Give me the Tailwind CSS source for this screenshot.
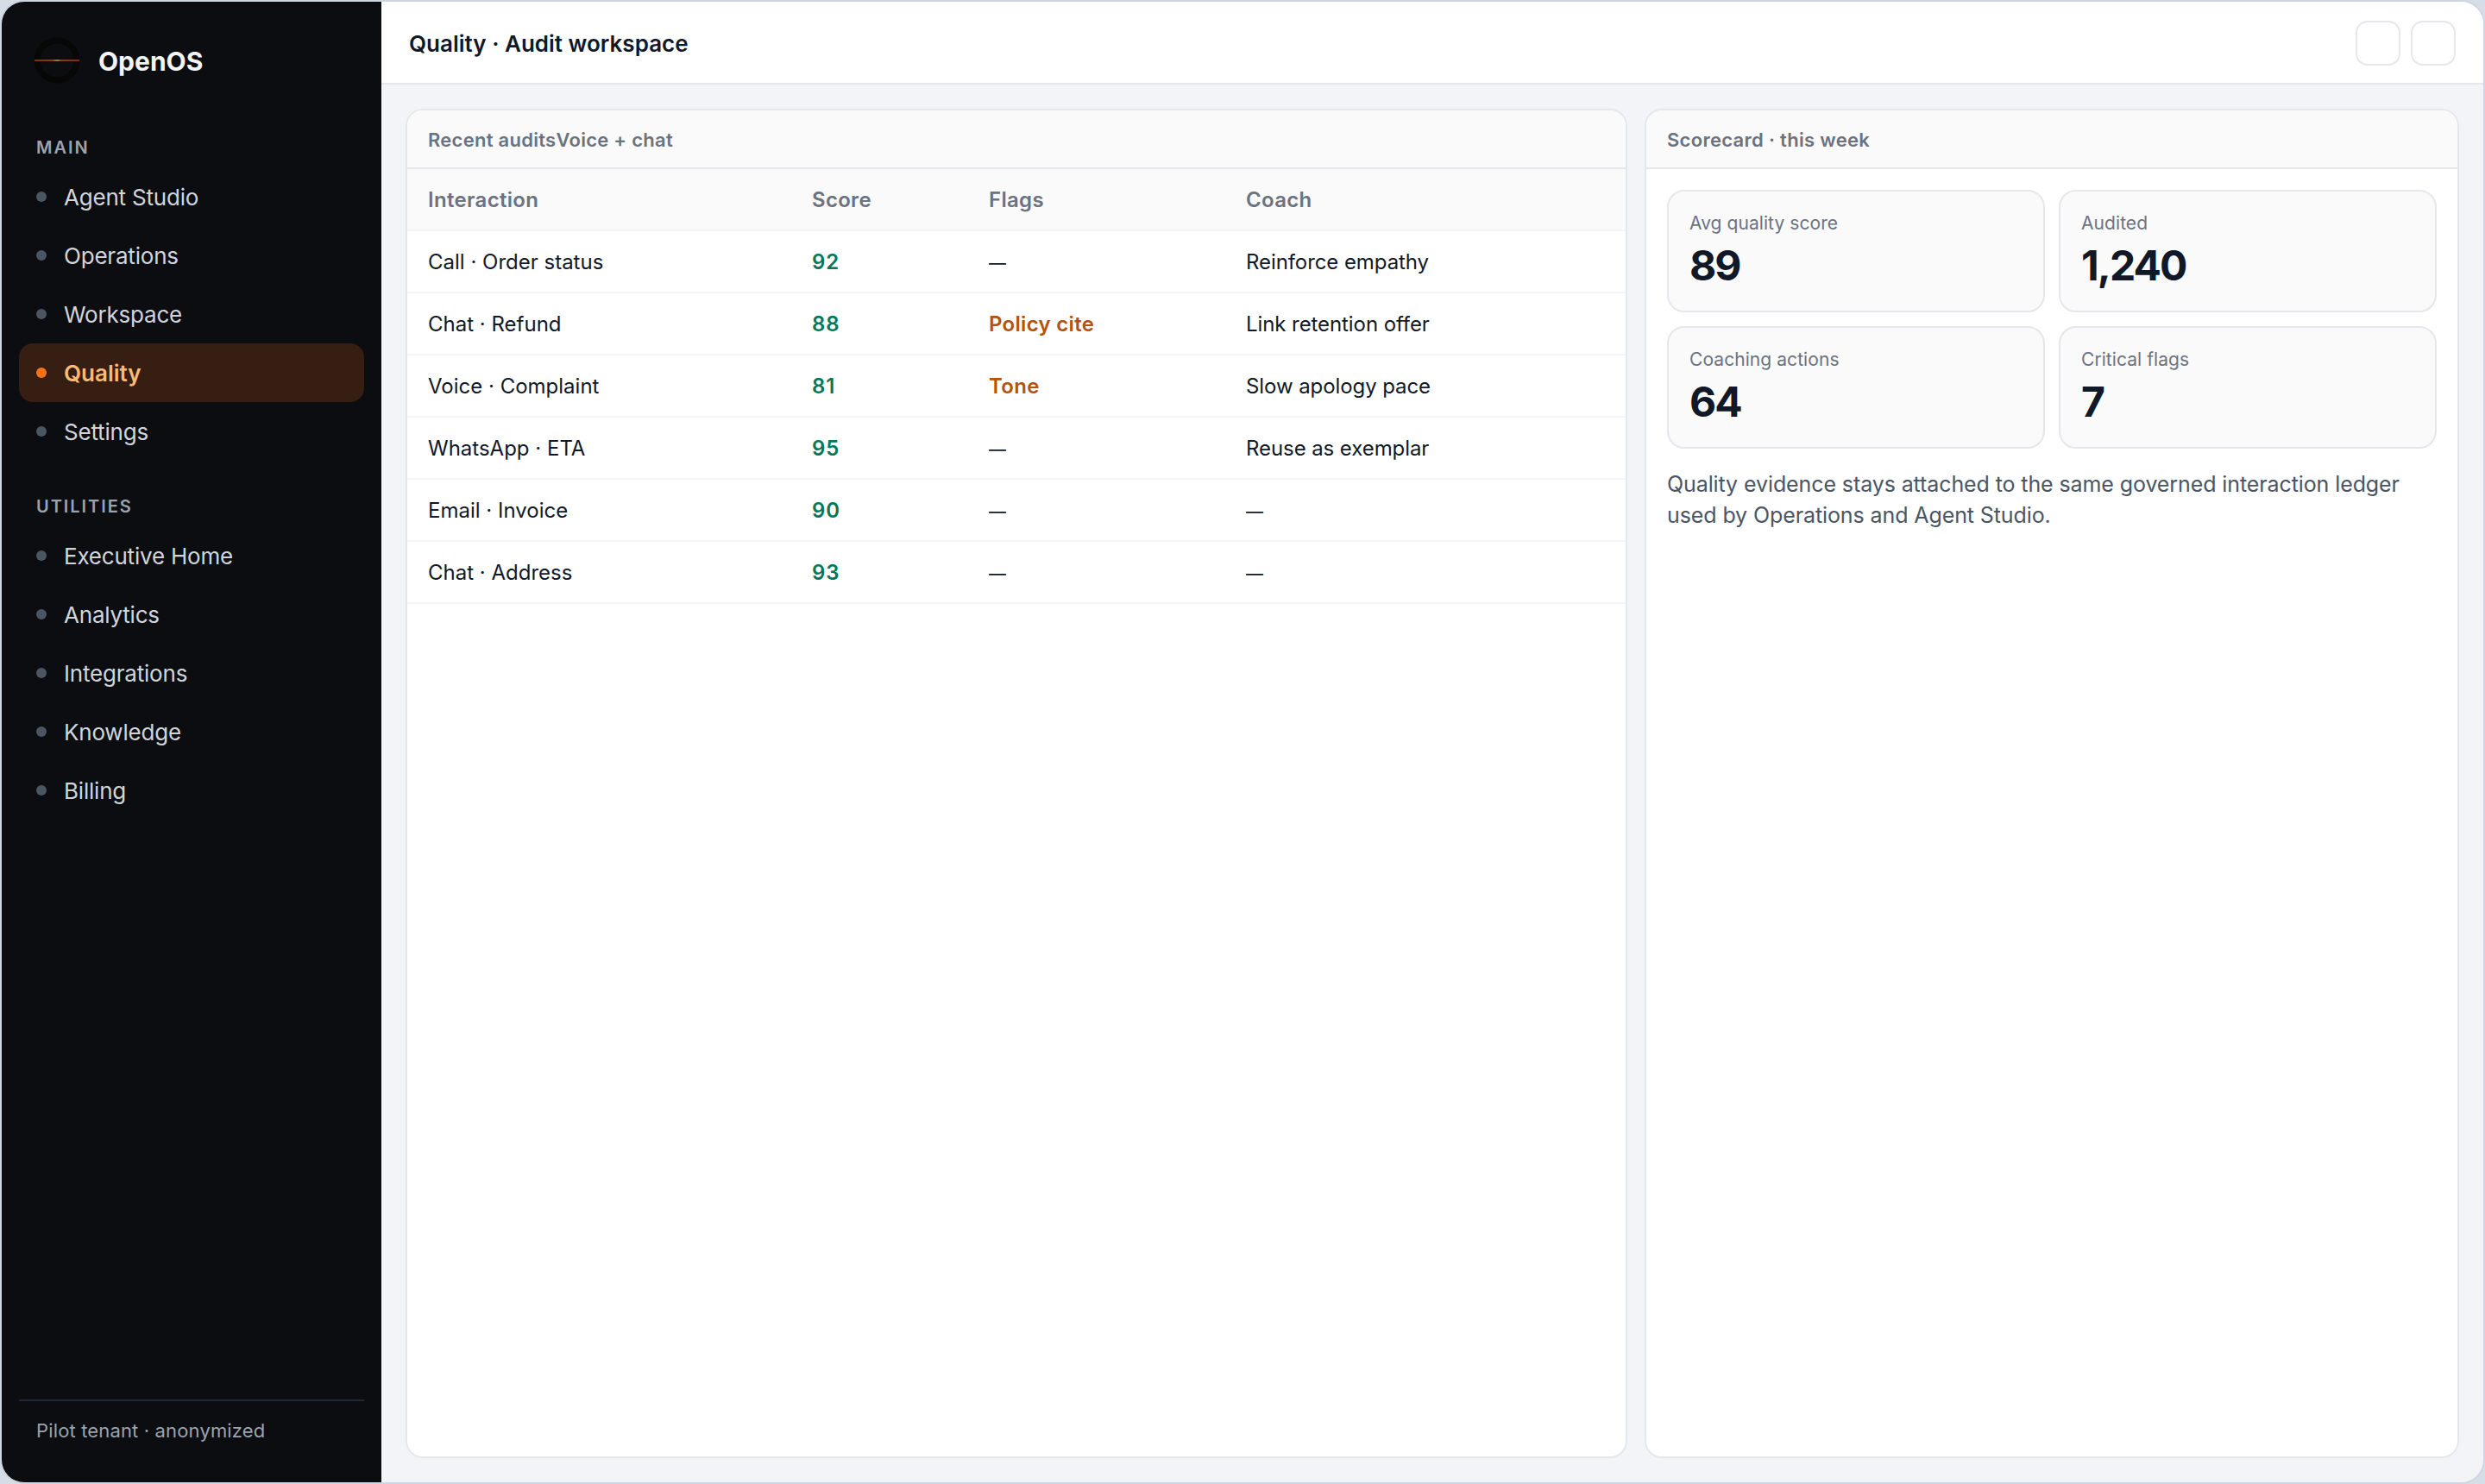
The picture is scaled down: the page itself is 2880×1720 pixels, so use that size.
<!DOCTYPE html>
<html lang="en">

<head>
    <meta charset="UTF-8" />
    <meta name="viewport" content="width=device-width, initial-scale=1.0" />
    <title>OpenOS - Quality</title>
    <script src="https://cdn.jsdelivr.net/npm/@tailwindcss/browser@4"></script>
</head>

<body class="h-screen overflow-hidden bg-[#d5dde6] font-['Inter',sans-serif] text-[#111827]">
    <div class="flex h-[1720px] w-[2880px] overflow-hidden rounded-[28px] border-2 border-[#d0d6e1] bg-[#f3f4f8]">
        <!-- sidebar -->
        <aside class="flex w-[440px] shrink-0 flex-col bg-[#0b0d10] px-5">
            <div class="flex h-[116px] items-center gap-[22px] pt-[21px] pl-[18px]">
                <svg class="-mt-0.5 h-[54px] w-[52px] shrink-0" viewBox="0 0 52 54" fill="none">
                    <defs>
                        <linearGradient id="beam" x1="0" x2="52" y1="0" y2="0" gradientUnits="userSpaceOnUse">
                            <stop offset="0" stop-color="#7d2c0e" />
                            <stop offset=".4" stop-color="#8a3a12" />
                            <stop offset=".5" stop-color="#8c8450" />
                            <stop offset=".6" stop-color="#8a3a12" />
                            <stop offset="1" stop-color="#7d2c0e" />
                        </linearGradient>
                    </defs>
                    <circle cx="26" cy="27" r="23" stroke="#070707" stroke-width="7" />
                    <rect y="26" width="52" height="2" fill="url(#beam)" />
                </svg>
                <span class="text-[30px] leading-9 font-bold text-[#f3f4f6]">OpenOS</span>
            </div>

            <h2 class="flex h-[76px] items-center pt-[30px] pl-5 text-[20px] font-semibold tracking-[1.95px] text-[#9ca3af]">MAIN</h2>
            <nav id="nav-main"></nav>
            <h2 class="flex h-[76px] items-center pt-[30px] pl-5 text-[20px] font-semibold tracking-[1.95px] text-[#9ca3af]">UTILITIES</h2>
            <nav id="nav-utilities"></nav>

            <div class="mt-auto h-24 border-t-2 border-[#1f2937] pt-[19px] pl-5 text-[22px] leading-[30px] tracking-[0.15px] text-[#9ca3af]">Pilot tenant · anonymized</div>
        </aside>

        <main class="flex min-w-0 flex-1 flex-col">
            <header class="flex h-24 shrink-0 items-center justify-between border-b-2 border-[#e5e7eb] bg-white px-8 pt-0.5">
                <h1 class="pt-0.5 text-[26px] leading-8 font-semibold">Quality · Audit workspace</h1>
                <div class="flex gap-3">
                    <button class="size-[52px] rounded-[14px] border-2 border-[#e5e7eb] bg-white"></button>
                    <button class="size-[52px] rounded-[14px] border-2 border-[#e5e7eb] bg-white"></button>
                </div>
            </header>

            <div class="grid flex-1 grid-cols-[3fr_2fr] gap-5 p-7">
                <section class="overflow-hidden rounded-[20px] border-2 border-[#e5e7eb] bg-white">
                    <div class="flex h-[68px] items-center border-b-2 border-[#e5e7eb] bg-[#fafafa] px-6 pt-0.5 text-[22px] font-semibold tracking-[0.27px] text-[#6b7280]">
                        <span>Recent audits</span><span>Voice + chat</span>
                    </div>
                    <table class="w-full table-fixed border-separate border-spacing-0 text-left text-[24px] leading-8">
                        <colgroup>
                            <col class="w-[445px]" />
                            <col class="w-[205px]" />
                            <col class="w-[298px]" />
                            <col />
                        </colgroup>
                        <thead class="bg-[#fafafa] tracking-[0.3px] text-[#6b7280]">
                            <tr>
                                <th class="h-[72px] border-b-2 border-[#f3f4f6] px-6 pt-0.5 font-semibold">Interaction</th>
                                <th class="h-[72px] border-b-2 border-[#f3f4f6] px-6 pt-0.5 font-semibold">Score</th>
                                <th class="h-[72px] border-b-2 border-[#f3f4f6] px-6 pt-0.5 font-semibold">Flags</th>
                                <th class="h-[72px] border-b-2 border-[#f3f4f6] px-6 pt-0.5 font-semibold">Coach</th>
                            </tr>
                        </thead>
                        <tbody id="audits"></tbody>
                    </table>
                </section>

                <section class="overflow-hidden rounded-[20px] border-2 border-[#e5e7eb] bg-white">
                    <div class="flex h-[68px] items-center border-b-2 border-[#e5e7eb] bg-[#fafafa] px-6 pt-0.5 text-[22px] font-semibold tracking-[0.3px] text-[#6b7280]">Scorecard · this week</div>
                    <div class="p-6">
                        <div id="stats" class="grid grid-cols-2 gap-4"></div>
                        <p class="mt-[23px] text-[25px] leading-9 tracking-[-0.1px] text-[#4b5563]">Quality evidence stays attached to the same governed interaction ledger used by Operations and Agent Studio.</p>
                    </div>
                </section>
            </div>
        </main>
    </div>

    <script>
        // sidebar links
        const active = "Quality";
        const menus = {
            "nav-main": ["Agent Studio", "Operations", "Workspace", "Quality", "Settings"],
            "nav-utilities": ["Executive Home", "Analytics", "Integrations", "Knowledge", "Billing"],
        };
        for (const id in menus) {
            for (const label of menus[id]) {
                const on = label === active;
                const item = document.createElement("a");
                item.className = on
                    ? "flex h-[68px] items-center gap-5 rounded-2xl bg-[#361e12] px-5 text-[26px] font-semibold text-[#fdba74]"
                    : "flex h-[68px] items-center gap-5 rounded-2xl px-5 text-[26px] tracking-[-0.2px] text-[#d1d5db]";
                const dot = on ? "bg-[#f97316]" : "bg-[#4b5563]";
                item.innerHTML = `<span class="size-3 rounded-full ${dot}"></span><span>${label}</span>`;
                document.getElementById(id).appendChild(item);
            }
        }

        // audit rows: interaction, score, flag, coach
        const audits = [
            ["Call · Order status", 92, "—", "Reinforce empathy"],
            ["Chat · Refund", 88, "Policy cite", "Link retention offer"],
            ["Voice · Complaint", 81, "Tone", "Slow apology pace"],
            ["WhatsApp · ETA", 95, "—", "Reuse as exemplar"],
            ["Email · Invoice", 90, "—", "—"],
            ["Chat · Address", 93, "—", "—"],
        ];
        const cell = "h-[72px] border-b-2 border-[#f3f4f6] px-6 pt-0.5";
        const dash = `<span class="text-[20px]">—</span>`;
        for (const [name, score, flag, coach] of audits) {
            const flagClass = flag === "—" ? "" : "font-semibold tracking-[0.3px] text-[#b45309]";
            document.getElementById("audits").innerHTML += `
                <tr>
                    <td class="${cell}">${name}</td>
                    <td class="${cell} font-semibold tracking-[1px] text-[#047857]">${score}</td>
                    <td class="${cell} ${flagClass}">${flag === "—" ? dash : flag}</td>
                    <td class="${cell} tracking-[-0.08px]">${coach === "—" ? dash : coach}</td>
                </tr>`;
        }

        // scorecard tiles
        const stats = [["Avg quality score", "89"], ["Audited", "1,240"], ["Coaching actions", "64"], ["Critical flags", "7"]];
        for (const [label, value] of stats) {
            document.getElementById("stats").innerHTML += `
                <div class="rounded-[20px] border-2 border-[#e5e7eb] bg-[#fafafa] p-6">
                    <div class="text-[21px] leading-[26px] tracking-[0.07px] text-[#6b7280]">${label}</div>
                    <div class="mt-2 text-[48px] leading-[56px] font-bold tracking-[-1.9px]">${value}</div>
                </div>`;
        }
    </script>
</body>

</html>
